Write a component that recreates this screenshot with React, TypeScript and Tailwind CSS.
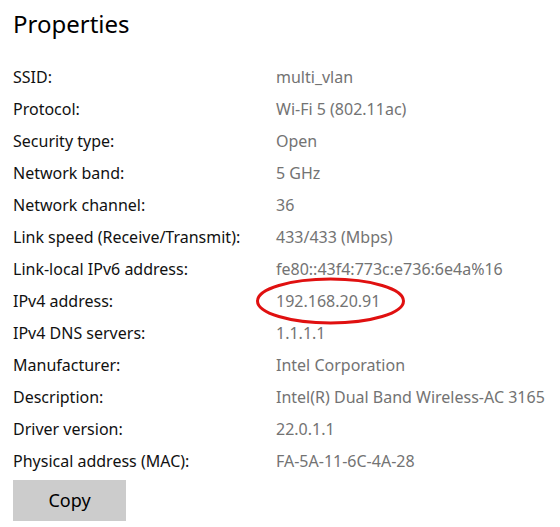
import React from "react";

const rows: [string, string][] = [
  ["SSID:", "multi_vlan"],
  ["Protocol:", "Wi-Fi 5 (802.11ac)"],
  ["Security type:", "Open"],
  ["Network band:", "5 GHz"],
  ["Network channel:", "36"],
  ["Link speed (Receive/Transmit):", "433/433 (Mbps)"],
  ["Link-local IPv6 address:", "fe80::43f4:773c:e736:6e4a%16"],
  ["IPv4 address:", "192.168.20.91"],
  ["IPv4 DNS servers:", "1.1.1.1"],
  ["Manufacturer:", "Intel Corporation"],
  ["Description:", "Intel(R) Dual Band Wireless-AC 3165"],
  ["Driver version:", "22.0.1.1"],
  ["Physical address (MAC):", "FA-5A-11-6C-4A-28"],
];

export default function App() {
  return (
    <div
      className="w-[560px] h-[527px] bg-white overflow-hidden pl-[13px] pt-[6px]"
      style={{ fontFamily: '"Noto Sans", "Open Sans", sans-serif' }}
    >
      <h1 className="text-[24px] leading-[36px] text-black font-normal">Properties</h1>
      <div className="mt-[19px] flex flex-col">
        {rows.map(([k, v]) => (
          <div key={k} className="flex h-[32px] items-center text-[16px] whitespace-nowrap">
            <div className="w-[263px] shrink-0 text-[#111111]">{k}</div>
            <div className="relative text-[#737373]">
              {v}
              {k === "IPv4 address:" && (
                <svg
                  className="absolute left-[-21px] top-[-13px]"
                  width="152"
                  height="50"
                  viewBox="0 0 152 50"
                >
                  <ellipse cx="75.5" cy="25" rx="73" ry="22" fill="none" stroke="#e01010" strokeWidth="3" />
                </svg>
              )}
            </div>
          </div>
        ))}
      </div>
      <button className="mt-[3px] w-[113px] h-[41px] bg-[#cccccc] text-[18px] text-black">Copy</button>
    </div>
  );
}
